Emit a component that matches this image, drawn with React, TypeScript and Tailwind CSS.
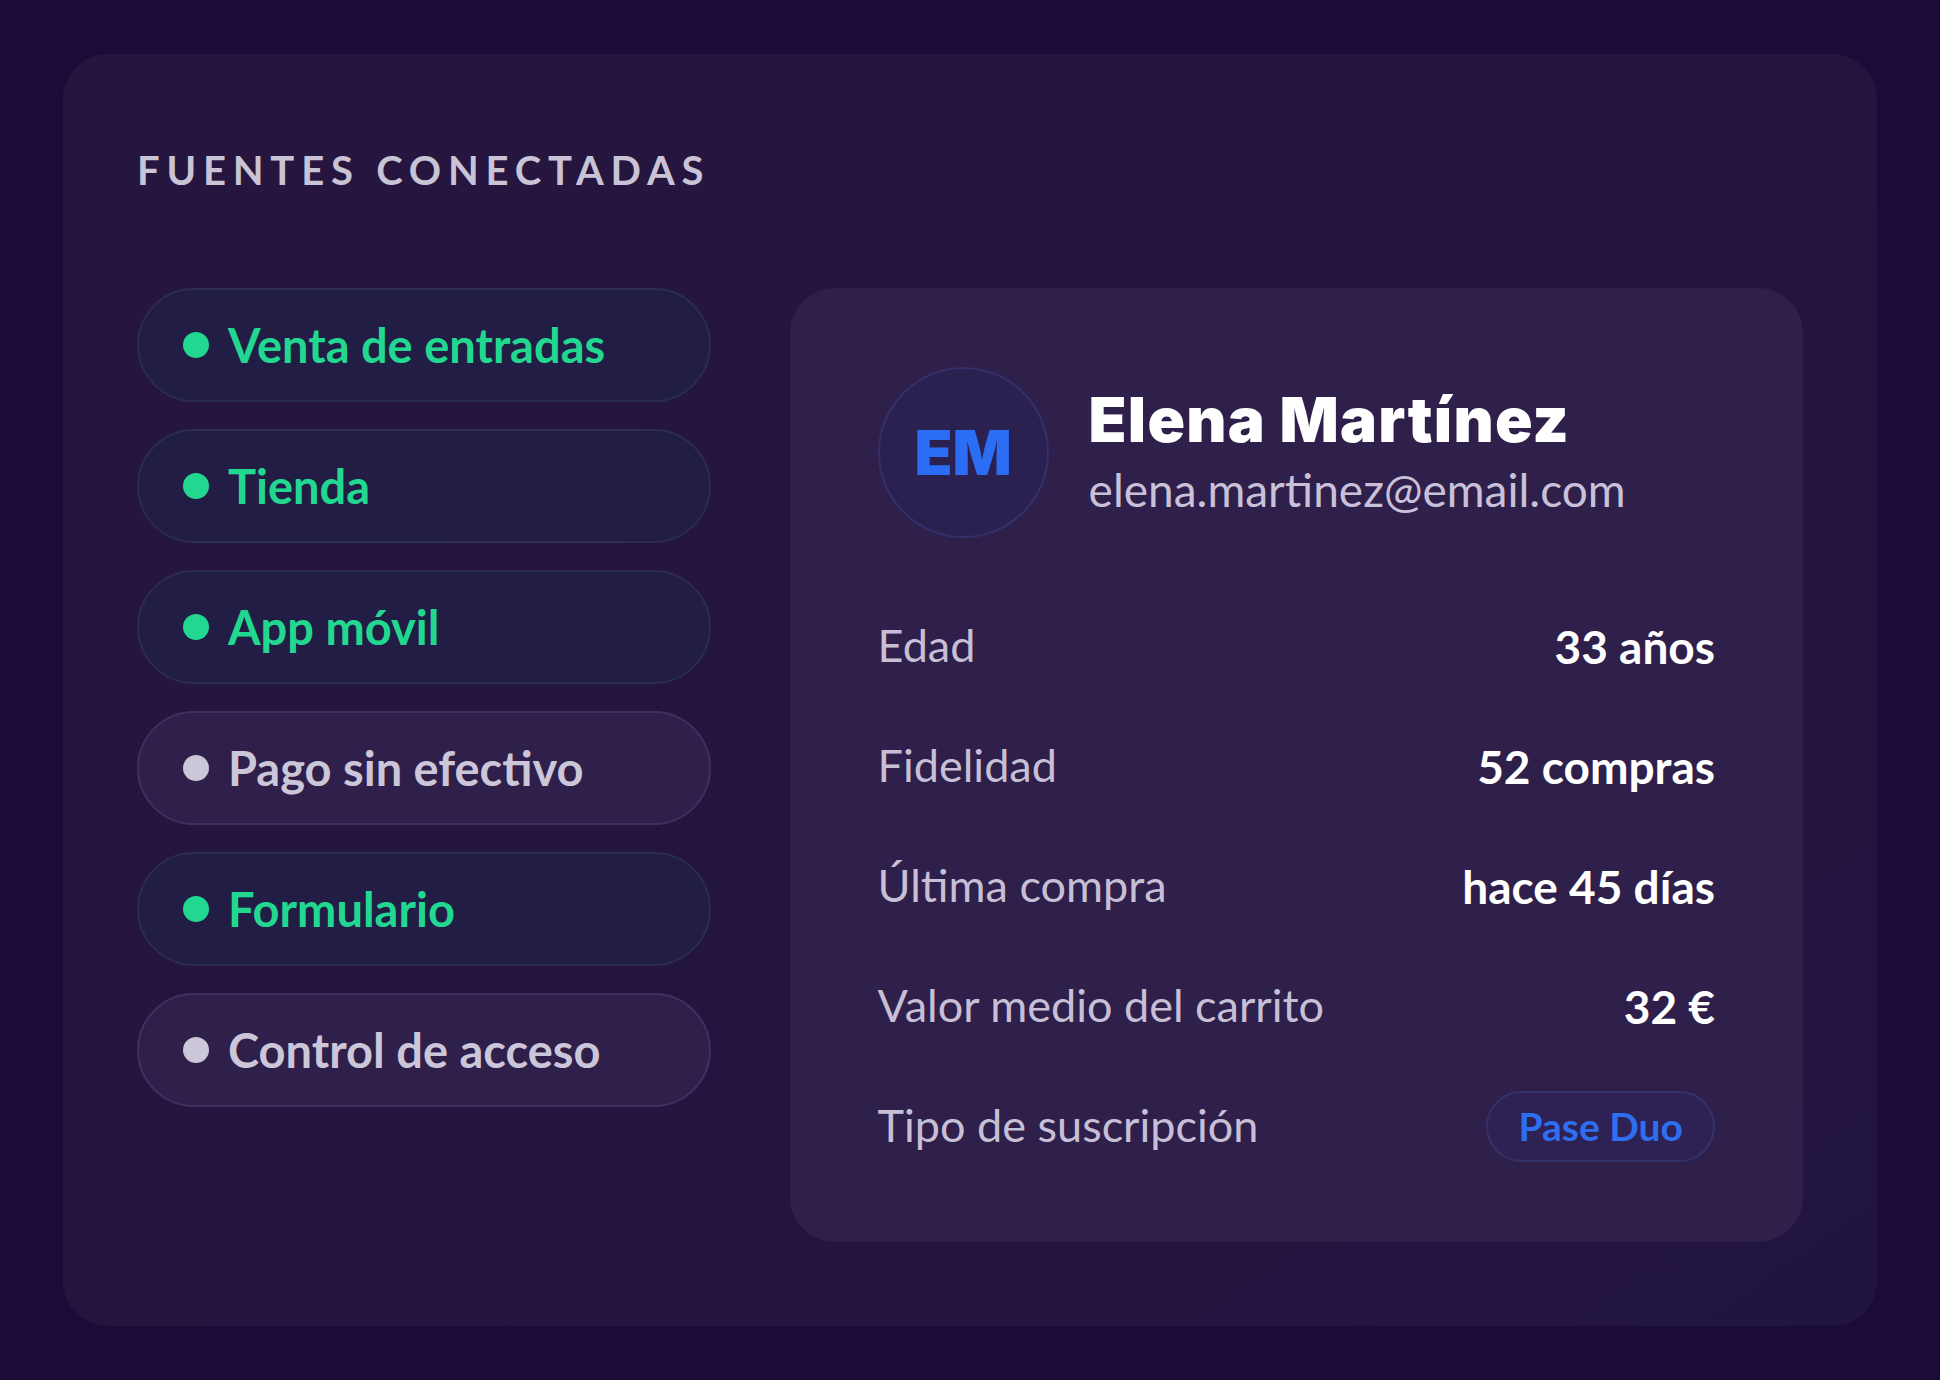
const sources = [
  { label: "Venta de entradas", active: true },
  { label: "Tienda", active: true },
  { label: "App móvil", active: true },
  { label: "Pago sin efectivo", active: false },
  { label: "Formulario", active: true },
  { label: "Control de acceso", active: false },
];

const stats = [
  { label: "Edad", value: "33 años" },
  { label: "Fidelidad", value: "52 compras" },
  { label: "Última compra", value: "hace 45 días" },
  { label: "Valor medio del carrito", value: "32 €" },
];

const body = { fontFamily: "Lato, 'Noto Sans', sans-serif" };
const heavy = { fontFamily: "Inter, 'Noto Sans', sans-serif" };

function SourcePill({ label, active }: { label: string; active: boolean }) {
  return (
    <div
      className={
        active
          ? "flex h-[114px] items-center gap-[19px] rounded-full border-2 border-[#2a2d4f] bg-[#221d45] px-[44px]"
          : "flex h-[114px] items-center gap-[19px] rounded-full border-2 border-[#41305f] bg-[#2f1f4b] px-[44px]"
      }
    >
      <span className={active ? "h-[26px] w-[26px] rounded-full bg-[#22d891]" : "h-[26px] w-[26px] rounded-full bg-[#cbc6d8]"} />
      <span className={active ? "text-[47px] font-bold text-[#22d891]" : "text-[47px] font-bold text-[#cbc6d8]"}>{label}</span>
    </div>
  );
}

export default function App() {
  return (
    <div className="min-h-[1380px] w-full bg-[#1a0b38] px-[63px] pt-[54px]" style={body}>
      <div className="w-[1814px] rounded-[45px] bg-gradient-to-br from-[#26163f] to-[#221440] px-[74px] pb-[84px] pt-[92px]">
        <h2 className="text-[40px] font-bold uppercase leading-[48px] tracking-[0.17em] text-[#c9c3d6]">Fuentes conectadas</h2>

        <div className="mt-[94px] flex gap-[79px]">
          <div className="flex w-[574px] flex-col gap-[27px]">
            {sources.map((s) => (
              <SourcePill key={s.label} label={s.label} active={s.active} />
            ))}
          </div>

          <div className="w-[1014px] rounded-[45px] bg-[#2f1f4b] px-[88px] pb-[56px] pt-[79px]">
            <div className="flex items-center gap-[40px]">
              <div className="flex h-[171px] w-[171px] shrink-0 items-center justify-center rounded-full border-2 border-[#33306a] bg-[#2a2150]">
                <span className="text-[62px] font-black text-[#2b6ef5]" style={heavy}>
                  EM
                </span>
              </div>
              <div className="flex flex-col">
                <span className="text-[62px] font-black leading-[70px] tracking-[0.02em] text-white" style={heavy}>
                  Elena Martínez
                </span>
                <span className="mt-[4px] text-[46px] font-normal leading-[62px] text-[#c9c1d9]">elena.martinez@email.com</span>
              </div>
            </div>

            <div className="mt-[48px] flex flex-col">
              {stats.map((s) => (
                <div key={s.label} className="flex h-[120px] items-center justify-between">
                  <span className="text-[45px] font-normal text-[#c7bfd6]">{s.label}</span>
                  <span className="text-[46px] font-bold text-white">{s.value}</span>
                </div>
              ))}
              <div className="flex h-[120px] items-center justify-between">
                <span className="text-[45px] font-normal text-[#c7bfd6]">Tipo de suscripción</span>
                <span className="flex h-[71px] items-center rounded-full border-2 border-[#33336a] bg-[#2d2253] px-[30px] text-[39px] font-bold text-[#2e6ef0]">
                  Pase Duo
                </span>
              </div>
            </div>
          </div>
        </div>
      </div>
    </div>
  );
}
